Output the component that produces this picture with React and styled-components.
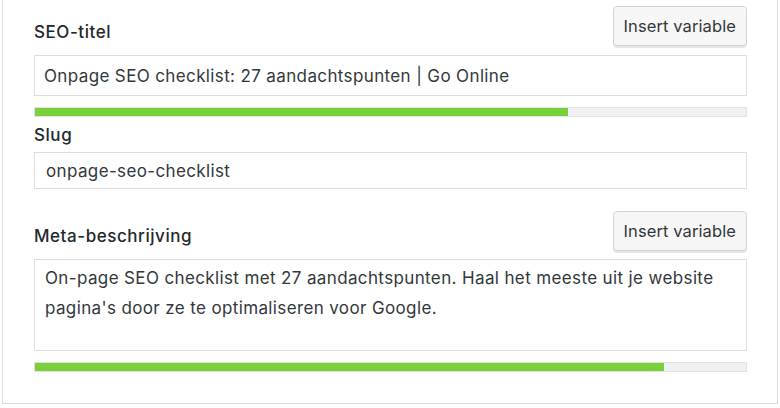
import React from "react";
import styled, { createGlobalStyle } from "styled-components";

const GlobalStyle = createGlobalStyle`
  html, body {
    margin: 0;
    padding: 0;
    background: #fff;
  }
  body {
    font-family: Inter, "Open Sans", "Liberation Sans", sans-serif;
    color: #32373c;
  }
`;

const Panel = styled.div`
  box-sizing: border-box;
  margin-left: 2px;
  width: 776px;
  height: 404px;
  border: 1px solid #dcdcdc;
  border-top: none;
  padding: 6px 30px 0 31px;
  background: #fff;
`;

const Header = styled.div`
  display: flex;
  justify-content: space-between;
  align-items: flex-end;
  height: ${(p) => p.$height || 40}px;
  margin-top: ${(p) => p.$top || 0}px;
  margin-bottom: ${(p) => p.$gap || 9}px;
`;

const Label = styled.label`
  font-size: 17px;
  font-weight: 500;
  letter-spacing: 0.55px;
  color: #23282d;
  line-height: 20px;
  padding-bottom: ${(p) => p.$bottom || 0}px;
`;

const InsertButton = styled.button`
  box-sizing: border-box;
  height: 40px;
  padding: 0 10px;
  font-family: inherit;
  font-size: 16.5px;
  letter-spacing: 0.1px;
  color: #32373c;
  background: #f7f7f7;
  border: 1px solid #d4d4d4;
  border-radius: 4px;
  box-shadow: 0 2px 0 #e6e6e6;
  cursor: pointer;
`;

const Field = styled.div`
  box-sizing: border-box;
  height: ${(p) => p.$height}px;
  border: 1px solid #dedede;
  padding: ${(p) => p.$padding || "0 9px"};
  font-size: 17px;
  letter-spacing: 0.37px;
  color: #32373c;
  display: flex;
  align-items: ${(p) => (p.$multi ? "flex-start" : "center")};
  line-height: ${(p) => (p.$multi ? "30px" : "20px")};
  background: #fff;
`;

const Progress = styled.div`
  box-sizing: border-box;
  height: 10px;
  margin-top: 11px;
  border: 1px solid #e2e2e2;
  background: #f1f1f1;
  overflow: hidden;
`;

const Fill = styled.div`
  height: 100%;
  background: #7ad03a;
`;

export default function App() {
  return (
    <>
      <GlobalStyle />
      <Panel>
        <Header $height={40} $gap={9}>
          <Label $bottom={4}>SEO-titel</Label>
          <InsertButton>Insert variable</InsertButton>
        </Header>
        <Field $height={41}>Onpage SEO checklist: 27 aandachtspunten | Go Online</Field>
        <Progress>
          <Fill style={{ width: "75%" }} />
        </Progress>

        <Header $height={29} $gap={6}>
          <Label $bottom={1}>Slug</Label>
        </Header>
        <Field $height={37} $padding="0 11px">onpage-seo-checklist</Field>

        <Header $height={40} $gap={8} $top={22}>
          <Label $bottom={5}>Meta-beschrijving</Label>
          <InsertButton>Insert variable</InsertButton>
        </Header>
        <Field $height={92} $multi $padding="3px 10px">
          On-page SEO checklist met 27 aandachtspunten. Haal het meeste uit je website
          pagina's door ze te optimaliseren voor Google.
        </Field>
        <Progress>
          <Fill style={{ width: "88.5%" }} />
        </Progress>
      </Panel>
    </>
  );
}
